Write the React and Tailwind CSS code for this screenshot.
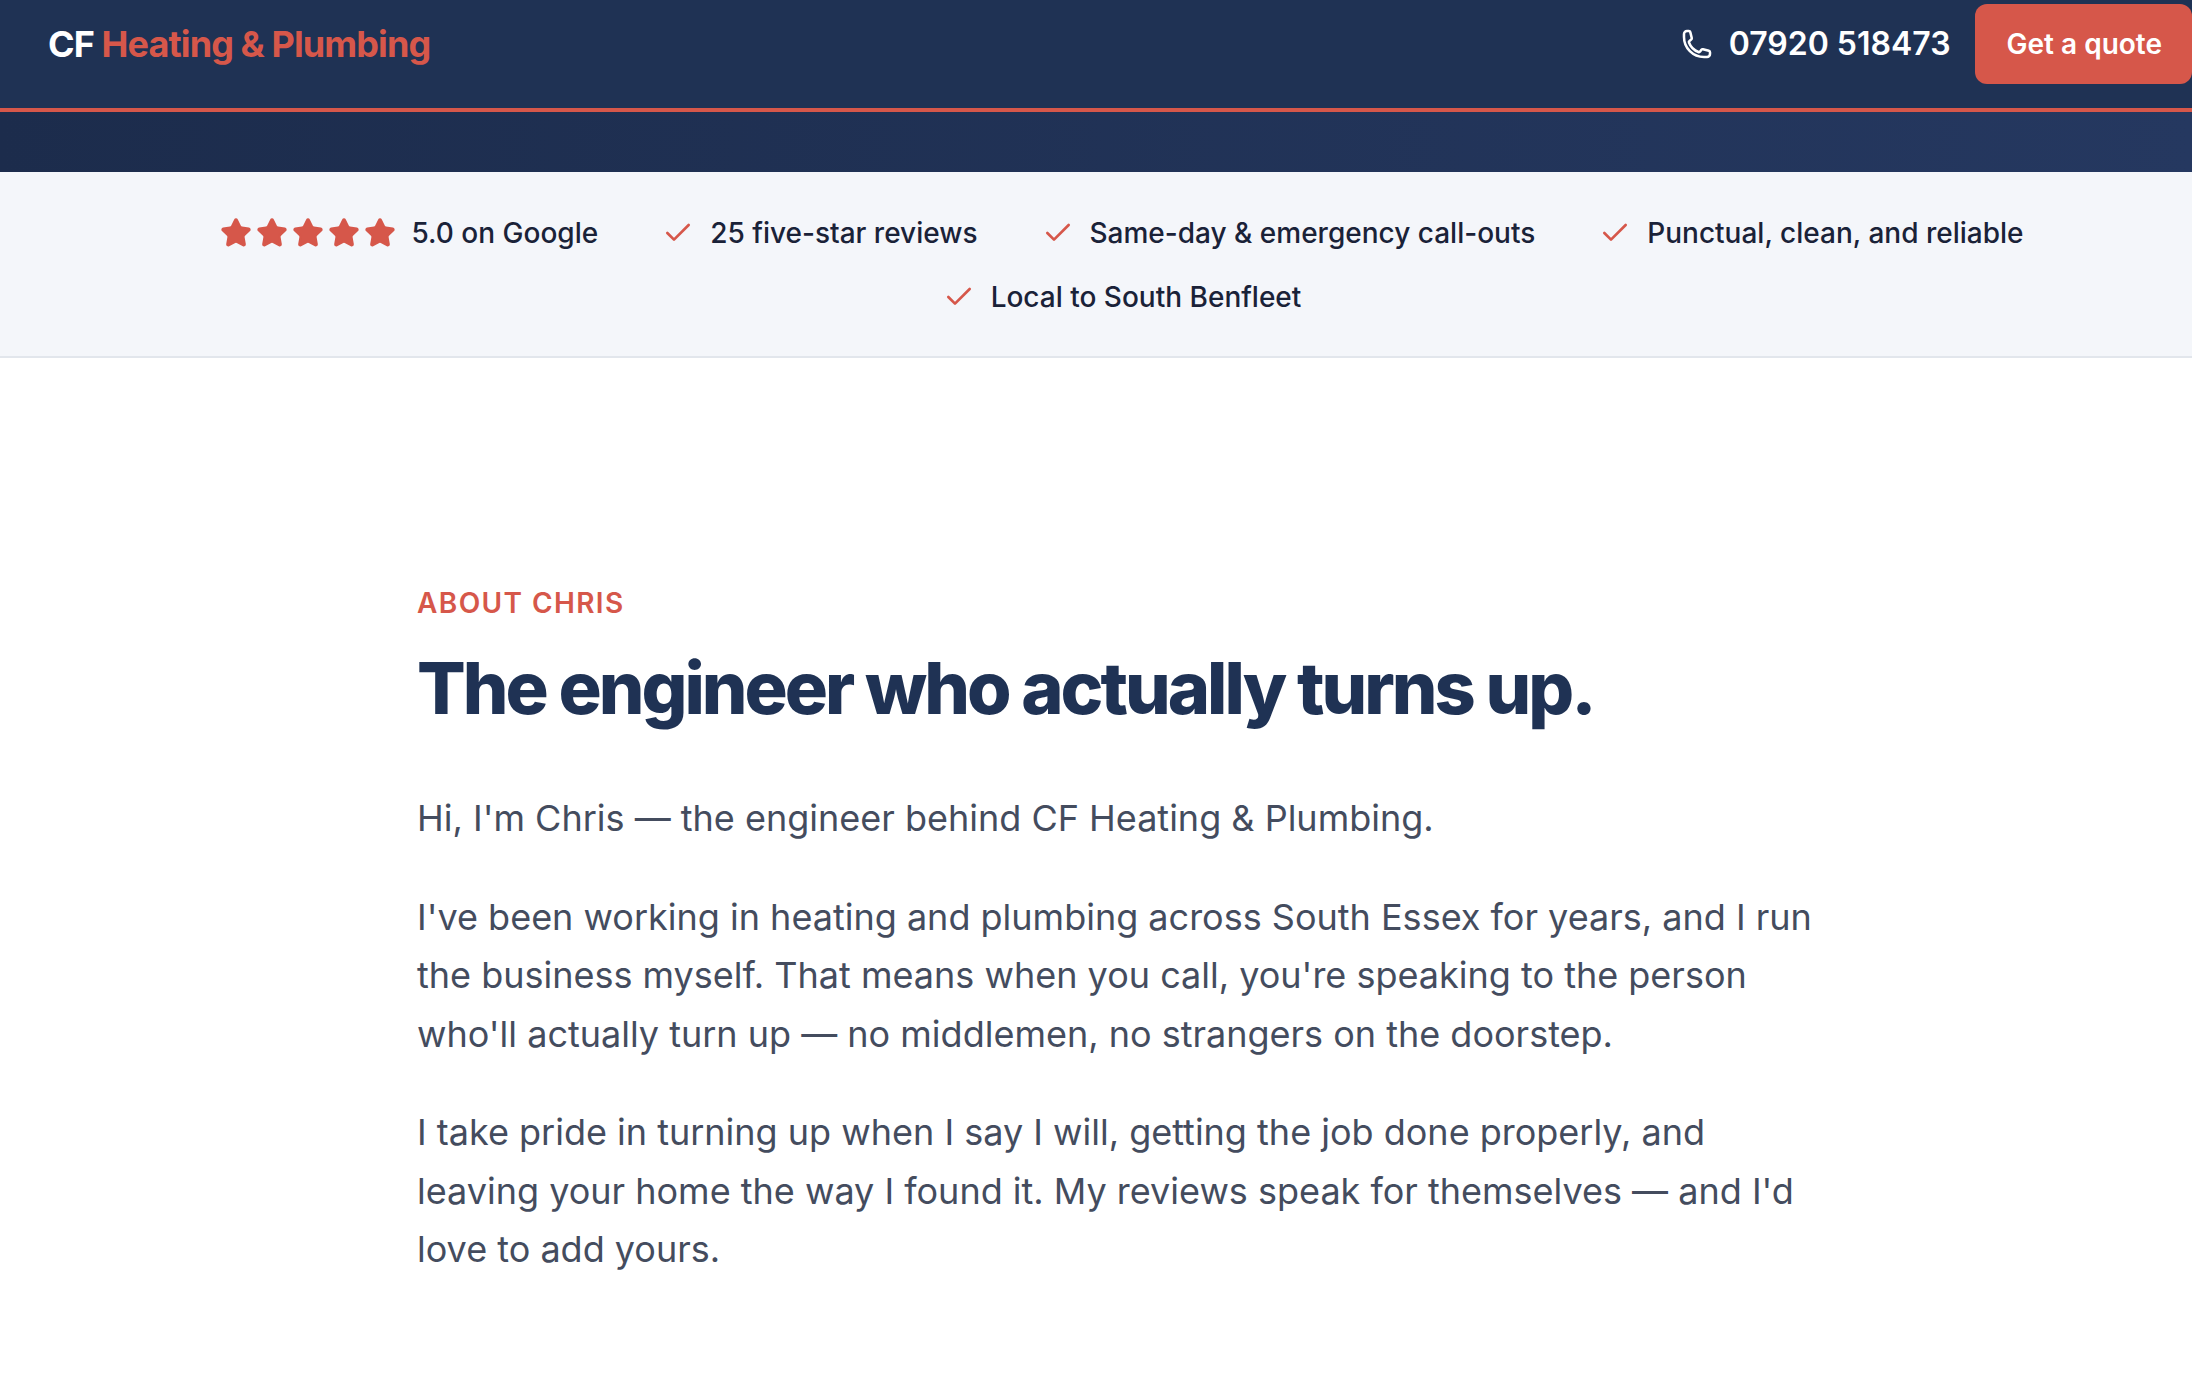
import React from "react";
import { Star, Check } from "lucide-react";
import { HiOutlinePhone } from "react-icons/hi2";

const checks = [
  "25 five-star reviews",
  "Same-day & emergency call-outs",
  "Punctual, clean, and reliable",
  "Local to South Benfleet",
];

function TrustItem({ children }) {
  return (
    <div className="flex items-center gap-4">
      <Check size={32} strokeWidth={2} className="text-[#d6574a]" />
      <span>{children}</span>
    </div>
  );
}

export default function App() {
  return (
    <div className="min-h-[1386px] bg-white font-['Inter',sans-serif] overflow-hidden">
      <header className="flex items-center justify-between bg-[#1f3254] border-b-4 border-[#d6574a] pl-12 pt-1 pb-6">
        <a className="text-[36px] leading-[56px] font-bold tracking-[-0.9px] text-white">
          CF <span className="text-[#d6574a]">Heating &amp; Plumbing</span>
        </a>
        <div className="flex items-center gap-6">
          <a className="flex items-center gap-4 text-[32px] font-semibold text-white">
            <HiOutlinePhone size={32} strokeWidth={1.9} />
            07920 518473
          </a>
          <button className="h-20 rounded-xl bg-[#d6574a] pl-8 pr-[30px] text-[28px] font-semibold text-white">
            Get a quote
          </button>
        </div>
      </header>

      <div className="h-[60px] bg-gradient-to-r from-[#1c2c4c] to-[#253860]"></div>

      <div className="border-b-2 border-[#e2e6ec] bg-[#f4f6fa] pt-[41px] pb-[39px] pl-[52px]">
        <div className="mx-auto flex max-w-[1984px] flex-wrap items-center justify-center gap-x-16 gap-y-6 text-[28px] leading-10 font-medium text-[#1a2238]">
          <div className="flex items-center gap-[15px]">
            <div className="flex gap-1">
              {[0, 1, 2, 3, 4].map((i) => (
                <Star key={i} size={32} className="fill-[#d6574a] text-[#d6574a]" />
              ))}
            </div>
            <span>5.0 on Google</span>
          </div>
          {checks.map((c) => (
            <TrustItem key={c}>{c}</TrustItem>
          ))}
        </div>
      </div>

      <section className="pl-[50px] pt-[225px]">
        <div className="mx-auto max-w-[1408px]">
          <p className="text-[28px] leading-10 font-semibold tracking-[1.4px] text-[#d6574a]">ABOUT CHRIS</p>
          <h1 className="mt-[25px] text-[72px] leading-[80px] font-extrabold tracking-[-3px] text-[#1f3254]">
            The engineer who actually turns up.
          </h1>
          <div className="mt-[61px] text-[36px] leading-[58.5px] text-[#444c5e]">
            <p className="mb-10">Hi, I'm Chris — the engineer behind CF Heating &amp; Plumbing.</p>
            <p className="mb-10">
              I've been working in heating and plumbing across South Essex for years, and I run the business myself.
              That means when you call, you're speaking to the person who'll actually turn up — no middlemen, no
              strangers on the doorstep.
            </p>
            <p>
              I take pride in turning up when I say I will, getting the job done properly, and leaving your home the
              way I found it. My reviews speak for themselves — and I'd love to add yours.
            </p>
          </div>
        </div>
      </section>
    </div>
  );
}
